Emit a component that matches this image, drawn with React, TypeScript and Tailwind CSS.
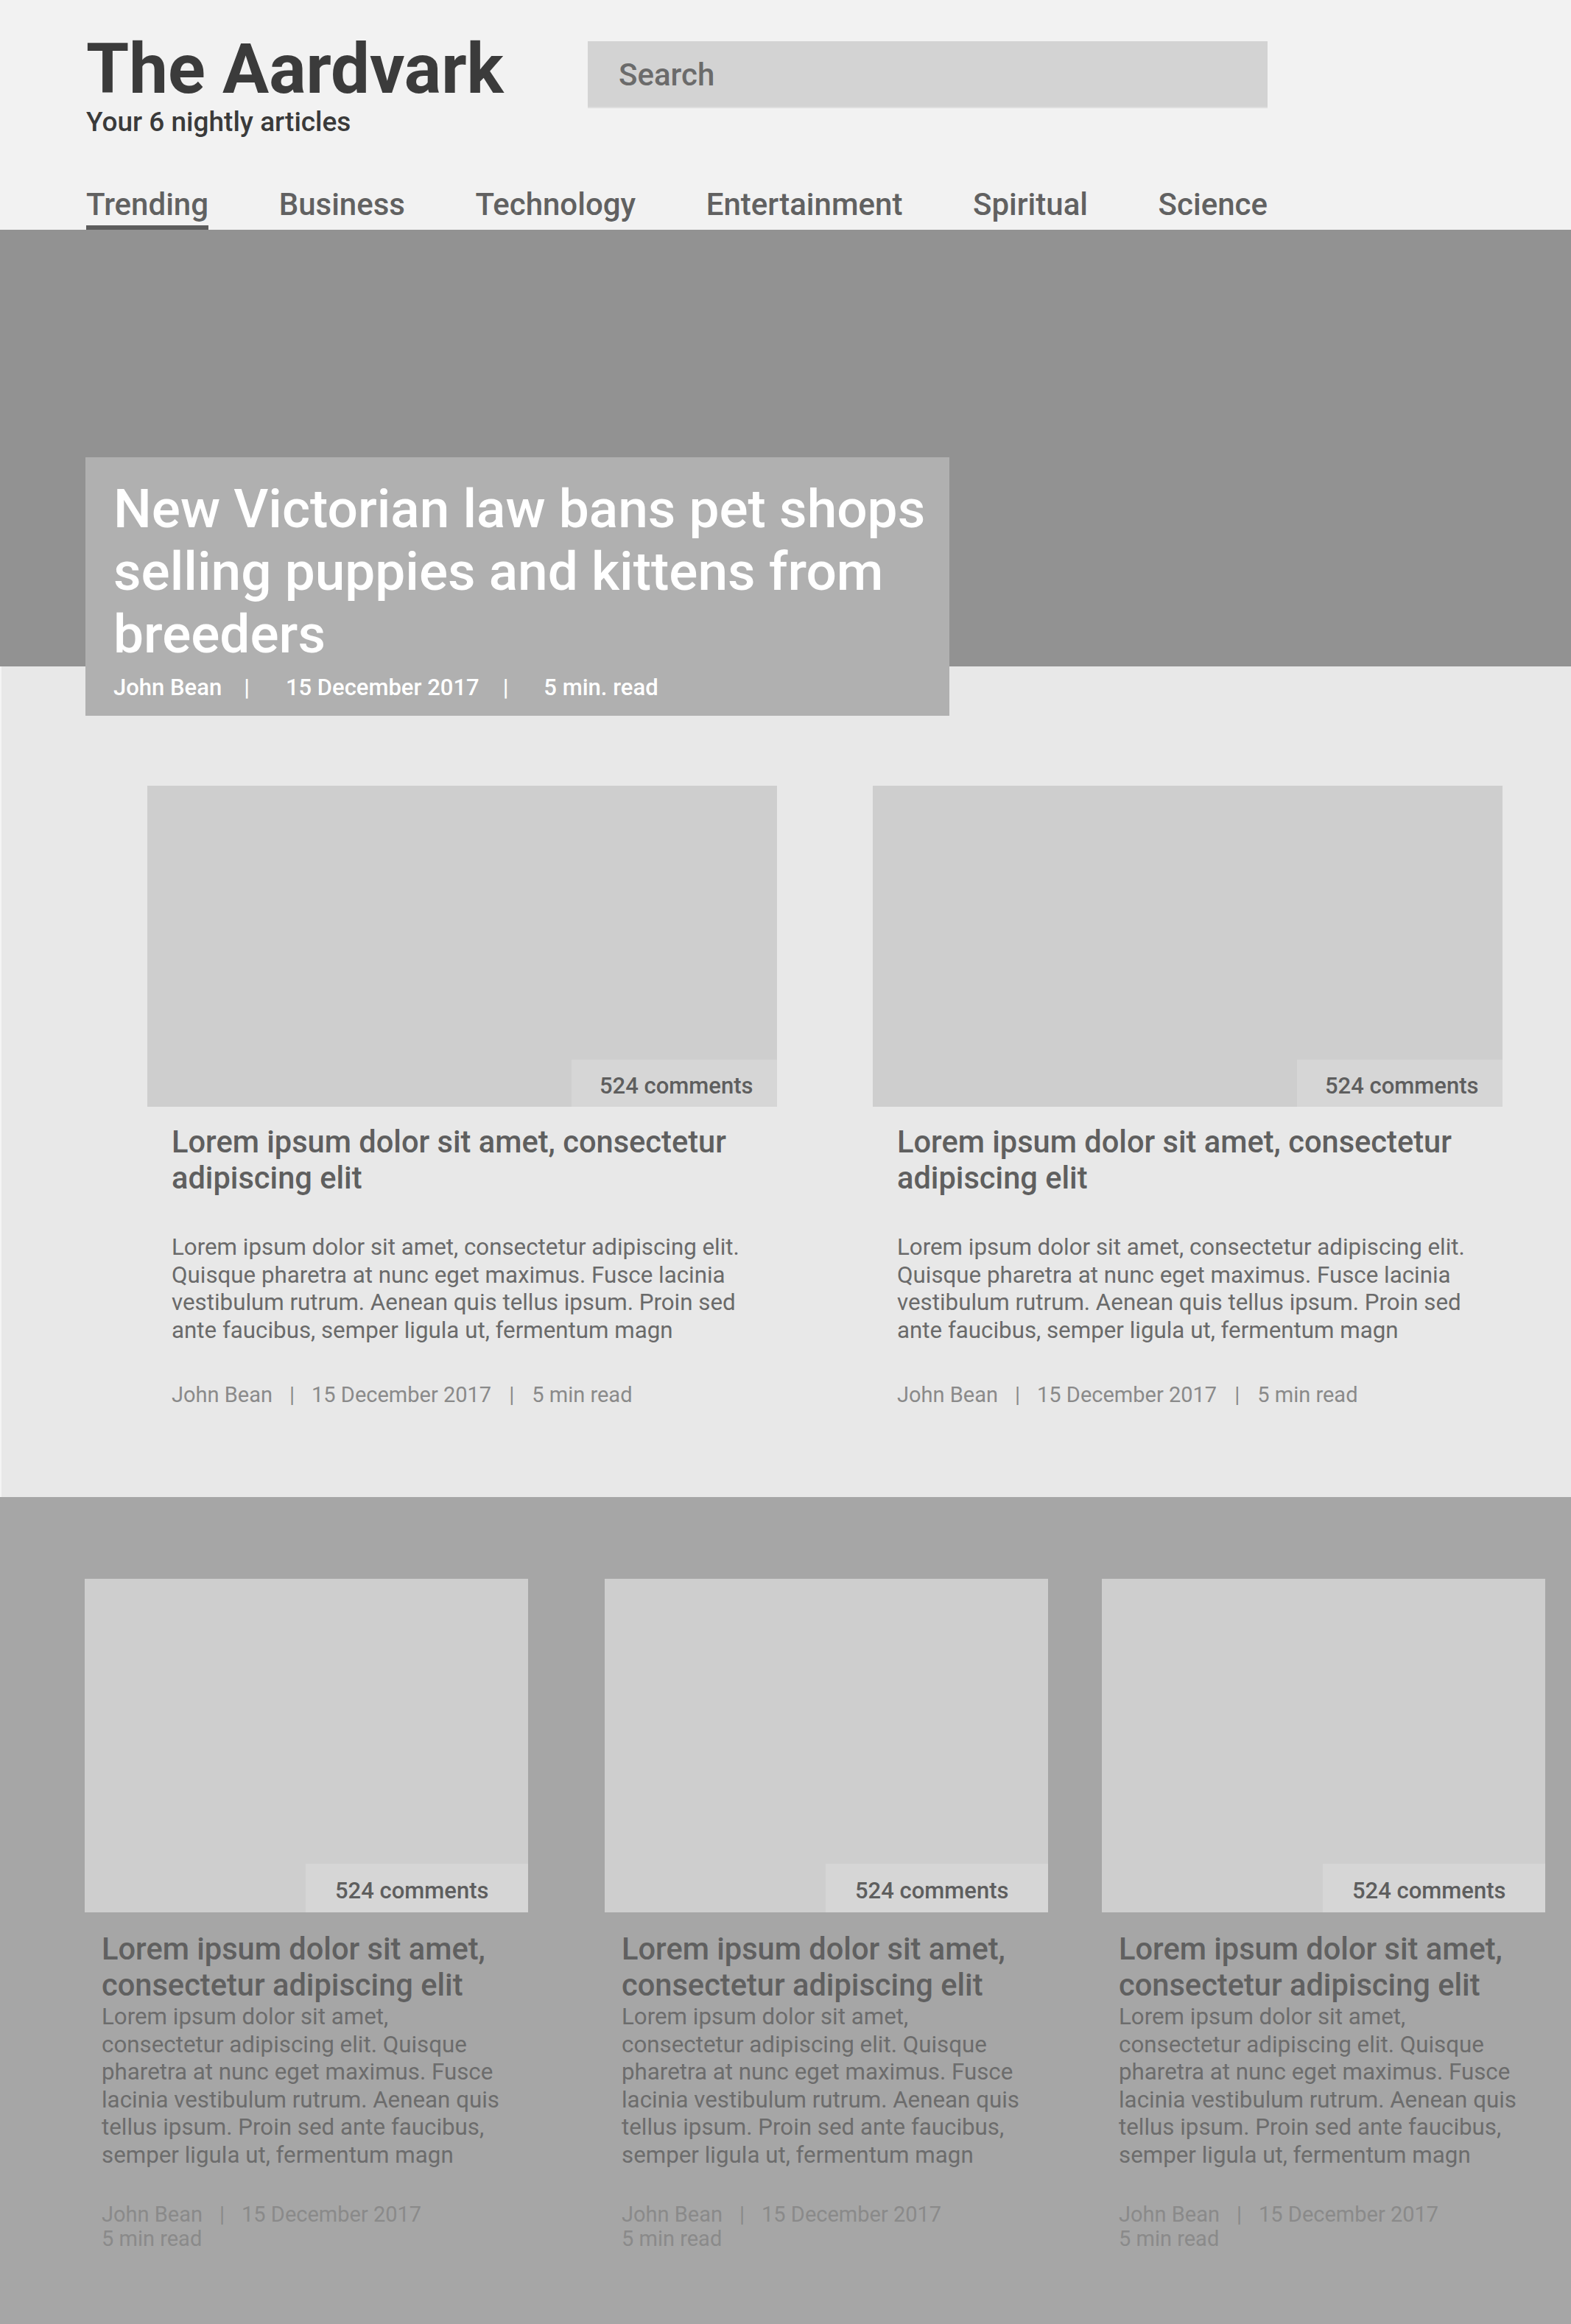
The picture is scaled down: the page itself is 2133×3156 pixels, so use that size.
import React from "react";

const BODY =
  "Lorem ipsum dolor sit amet, consectetur adipiscing elit. Quisque pharetra at nunc eget maximus. Fusce lacinia vestibulum rutrum. Aenean quis tellus ipsum. Proin sed ante faucibus, semper ligula ut, fermentum magn";

const NAV = ["Trending", "Business", "Technology", "Entertainment", "Spiritual", "Science"];

function Header() {
  return (
    <header className="h-[312px] bg-[#f2f2f2] flex flex-col pl-[117px]">
      <div className="w-[1604px] flex justify-between pt-[47px]">
        <div className="flex flex-col">
          <h1 className="text-[94px] leading-none font-bold text-[#3b3b3b]">The Aardvark</h1>
          <p className="mt-[6px] text-[37px] leading-none font-medium text-[#3a3a3a]">Your 6 nightly articles</p>
        </div>
        <div className="mt-[9px] w-[923px] h-[91px] bg-[#d3d3d3] border-b-2 border-[#dedede] flex items-center pl-[42px]">
          <span className="mt-[2px] text-[42px] leading-none font-medium text-[#6b6b6b]">Search</span>
        </div>
      </div>
      <nav className="mt-auto w-[1604px] flex justify-between">
        {NAV.map((n, i) => (
          <span
            key={n}
            className={
              i === 0
                ? "text-[42px] leading-[42px] font-medium text-[#616161] pb-[7px] border-b-[6px] border-[#5c5c5c]"
                : "text-[42px] leading-[42px] font-medium text-[#616161] pb-[7px] border-b-[6px] border-transparent"
            }
          >
            {n}
          </span>
        ))}
      </nav>
    </header>
  );
}

function Hero() {
  return (
    <section className="h-[593px] bg-[#929292] pt-[309px]">
      <div className="relative z-10 ml-[116px] w-[1173px] h-[351px] bg-[#b0b0b0] pl-[38px] pt-[28px] text-white">
        <h2 className="text-[73px] leading-[85px] font-medium w-[1120px]">
          New Victorian law bans pet shops selling puppies and kittens from breeders
        </h2>
        <div className="mt-[11px] flex text-[31px] leading-[37px] font-medium">
          <span>John Bean</span>
          <span className="ml-[30px] mr-[49px]">|</span>
          <span>15 December 2017</span>
          <span className="ml-[32px] mr-[48px]">|</span>
          <span>5 min. read</span>
        </div>
      </div>
    </section>
  );
}

function Badge({ wide }: { wide: boolean }) {
  return (
    <div
      className={
        wide
          ? "absolute right-0 bottom-0 w-[279px] h-[64px] bg-[#d6d6d6] pl-[38px] flex items-center"
          : "absolute right-0 bottom-0 w-[302px] h-[66px] bg-[#d6d6d6] pl-[40px] flex items-center"
      }
    >
      <span className="mt-[6px] text-[31px] leading-none font-medium text-[#5e5e5e]">524 comments</span>
    </div>
  );
}

function BigCard({ extraClass }: { extraClass: string }) {
  return (
    <article className={"w-[855px] " + extraClass}>
      <div className="relative h-[436px] bg-[#cecece]">
        <Badge wide={true} />
      </div>
      <div className="px-[33px]">
        <h3 className="mt-[23px] text-[41.6px] leading-[49px] font-medium text-[#5f5f5f]">
          Lorem ipsum dolor sit amet, consectetur adipiscing elit
        </h3>
        <p className="mt-[51px] text-[31.3px] leading-[37.5px] text-[#6a6a6a]">{BODY}</p>
        <div className="mt-[52px] flex text-[29px] leading-[35px] text-[#8a8a8a]">
          <span>John Bean</span>
          <span className="mx-[23px]">|</span>
          <span>15 December 2017</span>
          <span className="mx-[24px]">|</span>
          <span>5 min read</span>
        </div>
      </div>
    </article>
  );
}

function SmallCard({ extraClass }: { extraClass: string }) {
  return (
    <article className={"w-[602px] " + extraClass}>
      <div className="relative h-[453px] bg-[#cecece]">
        <Badge wide={false} />
      </div>
      <div className="pl-[23px] pr-[29px]">
        <h3 className="mt-[25px] text-[41.6px] leading-[49px] font-medium text-[#606060]">
          Lorem ipsum dolor sit amet, consectetur adipiscing elit
        </h3>
        <p className="text-[31.3px] leading-[37.5px] text-[#6c6c6c]">{BODY}</p>
        <div className="mt-[46px] text-[29px] leading-[33px] text-[#8a8a8a]">
          <div className="flex">
            <span>John Bean</span>
            <span className="mx-[23px]">|</span>
            <span>15 December 2017</span>
          </div>
          <div>5 min read</div>
        </div>
      </div>
    </article>
  );
}

export default function App() {
  return (
    <div className="w-[2133px] min-h-[3156px] bg-[#a6a6a6] font-['Roboto',sans-serif]">
      <Header />
      <Hero />
      <section className="h-[1128px] bg-[#e8e8e8] border-l-2 border-[#f4f4f4] pt-[162px] flex">
        <BigCard extraClass="ml-[198px]" />
        <BigCard extraClass="ml-[130px]" />
      </section>
      <section className="h-[1123px] bg-[#a6a6a6] pt-[111px] flex">
        <SmallCard extraClass="ml-[115px]" />
        <SmallCard extraClass="ml-[104px]" />
        <SmallCard extraClass="ml-[73px]" />
      </section>
    </div>
  );
}
